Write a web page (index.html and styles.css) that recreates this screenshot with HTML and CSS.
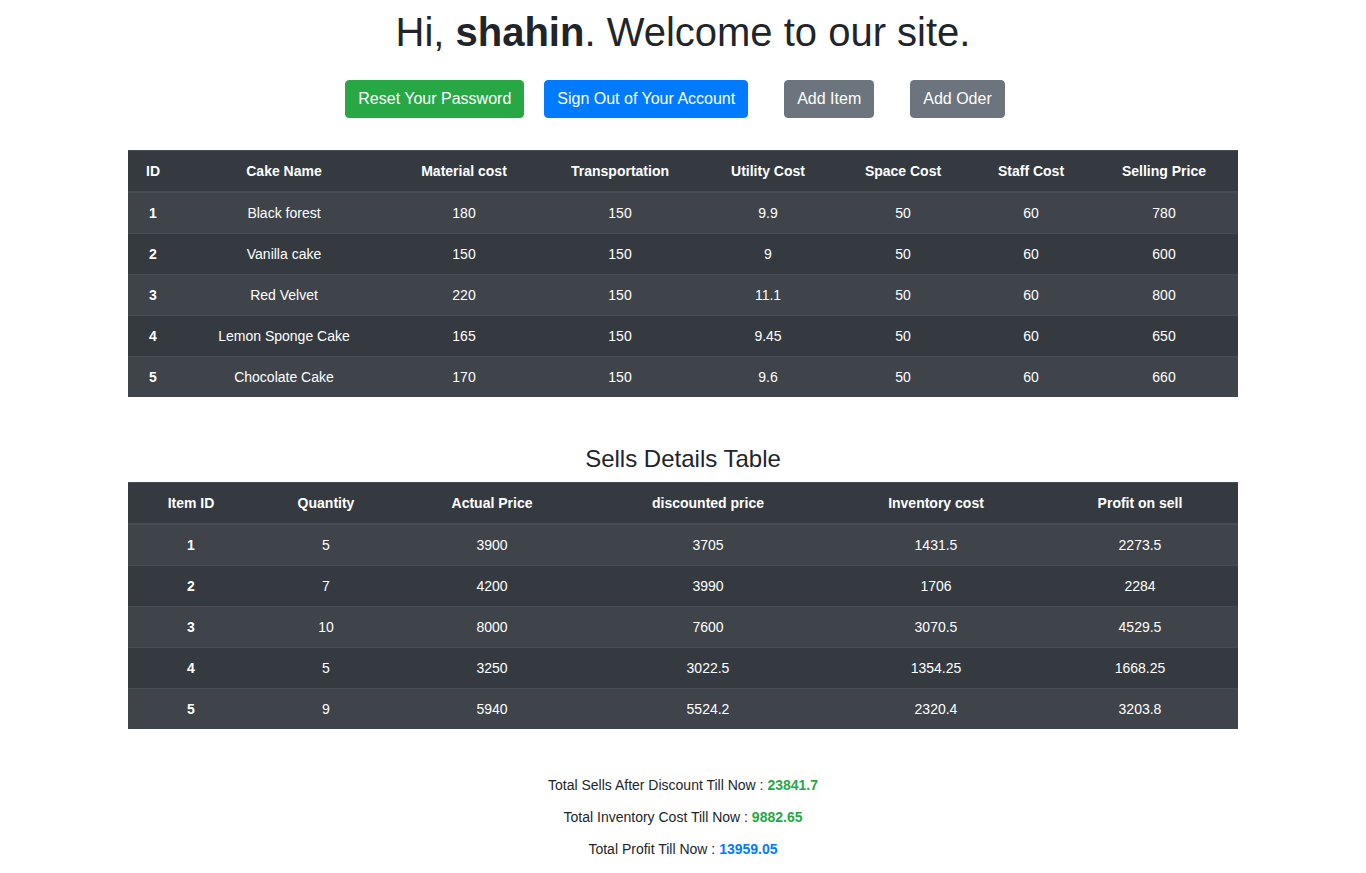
FILE: index.html
```html
<!DOCTYPE html>
<html lang="en">
<head>
<meta charset="utf-8">
<title>Welcome</title>
<link rel="stylesheet" href="styles.css">
</head>
<body>
<div class="page">
  <h1 class="title">Hi, <b>shahin</b>. Welcome to our site.</h1>
  <div class="actions">
    <a class="btn btn-green gap-20">Reset Your Password</a>
    <a class="btn btn-blue gap-36">Sign Out of Your Account</a>
    <a class="btn btn-gray gap-36">Add Item</a>
    <a class="btn btn-gray gap-16">Add Oder</a>
  </div>

  <div class="container">
    <table class="dtable">
      <colgroup>
        <col style="width:50px"><col style="width:212px"><col style="width:148px"><col style="width:164px">
        <col style="width:132px"><col style="width:138px"><col style="width:118px"><col style="width:148px">
      </colgroup>
      <thead>
        <tr><th>ID</th><th>Cake Name</th><th>Material cost</th><th>Transportation</th><th>Utility Cost</th><th>Space Cost</th><th>Staff Cost</th><th>Selling Price</th></tr>
      </thead>
      <tbody>
        <tr><th>1</th><td>Black forest</td><td>180</td><td>150</td><td>9.9</td><td>50</td><td>60</td><td>780</td></tr>
        <tr><th>2</th><td>Vanilla cake</td><td>150</td><td>150</td><td>9</td><td>50</td><td>60</td><td>600</td></tr>
        <tr><th>3</th><td>Red Velvet</td><td>220</td><td>150</td><td>11.1</td><td>50</td><td>60</td><td>800</td></tr>
        <tr><th>4</th><td>Lemon Sponge Cake</td><td>165</td><td>150</td><td>9.45</td><td>50</td><td>60</td><td>650</td></tr>
        <tr><th>5</th><td>Chocolate Cake</td><td>170</td><td>150</td><td>9.6</td><td>50</td><td>60</td><td>660</td></tr>
      </tbody>
    </table>

    <h4 class="subtitle">Sells Details Table</h4>

    <table class="dtable">
      <colgroup>
        <col style="width:126px"><col style="width:144px"><col style="width:188px"><col style="width:244px"><col style="width:212px"><col style="width:196px">
      </colgroup>
      <thead>
        <tr><th>Item ID</th><th>Quantity</th><th>Actual Price</th><th>discounted price</th><th>Inventory cost</th><th>Profit on sell</th></tr>
      </thead>
      <tbody>
        <tr><th>1</th><td>5</td><td>3900</td><td>3705</td><td>1431.5</td><td>2273.5</td></tr>
        <tr><th>2</th><td>7</td><td>4200</td><td>3990</td><td>1706</td><td>2284</td></tr>
        <tr><th>3</th><td>10</td><td>8000</td><td>7600</td><td>3070.5</td><td>4529.5</td></tr>
        <tr><th>4</th><td>5</td><td>3250</td><td>3022.5</td><td>1354.25</td><td>1668.25</td></tr>
        <tr><th>5</th><td>9</td><td>5940</td><td>5524.2</td><td>2320.4</td><td>3203.8</td></tr>
      </tbody>
    </table>

    <div class="summary">
      <p>Total Sells After Discount Till Now : <b class="green">23841.7</b></p>
      <p>Total Inventory Cost Till Now : <b class="green">9882.65</b></p>
      <p>Total Profit Till Now : <b class="blue">13959.05</b></p>
    </div>
  </div>
</div>
</body>
</html>
```

FILE: styles.css
```css
* { box-sizing: border-box; }
html, body { margin: 0; padding: 0; }
body {
  font-family: "Liberation Sans", Arial, Helvetica, sans-serif;
  font-size: 16px;
  line-height: 1.5;
  color: #212529;
  background: #fff;
}
.page { padding-top: 8px; }
.title {
  margin: 0;
  text-align: center;
  font-size: 40px;
  font-weight: 400;
  line-height: 48px;
}
.title b { font-weight: 700; }
.actions {
  display: flex;
  justify-content: center;
  margin-top: 24px;
}
.btn {
  display: inline-block;
  padding: 6px 12px;
  font-size: 16px;
  line-height: 24px;
  border-radius: 4px;
  color: #fff;
  border: 1px solid transparent;
  white-space: nowrap;
}
.gap-20 { margin-right: 20px; }
.gap-36 { margin-right: 36px; }
.gap-16 { margin-right: 16px; }
.btn-green { background: #28a745; border-color: #28a745; }
.btn-blue { background: #007bff; border-color: #007bff; }
.btn-gray { background: #6c757d; border-color: #6c757d; }

.container {
  width: 1110px;
  margin: 32px auto 0;
}
.dtable {
  width: 1110px;
  table-layout: fixed;
  border-collapse: collapse;
  background: #343a40;
  color: #fff;
  font-size: 14px;
  line-height: 16px;
}
.dtable th, .dtable td {
  padding: 12px;
  text-align: center;
  border-top: 1px solid #454d55;
  vertical-align: top;
}
.dtable th { font-weight: 700; }
.dtable thead th { border-bottom: 2px solid #454d55; }
.dtable tbody tr:nth-child(odd) { background: #3e444a; }

.subtitle {
  margin: 47px 0 9px;
  text-align: center;
  font-size: 24px;
  font-weight: 400;
  line-height: 29px;
}
.summary {
  margin-top: 48px;
  text-align: center;
  font-size: 14px;
  line-height: 16px;
}
.summary p { margin: 0 0 16px; }
.green { color: #28a745; }
.blue { color: #007bff; }
```
